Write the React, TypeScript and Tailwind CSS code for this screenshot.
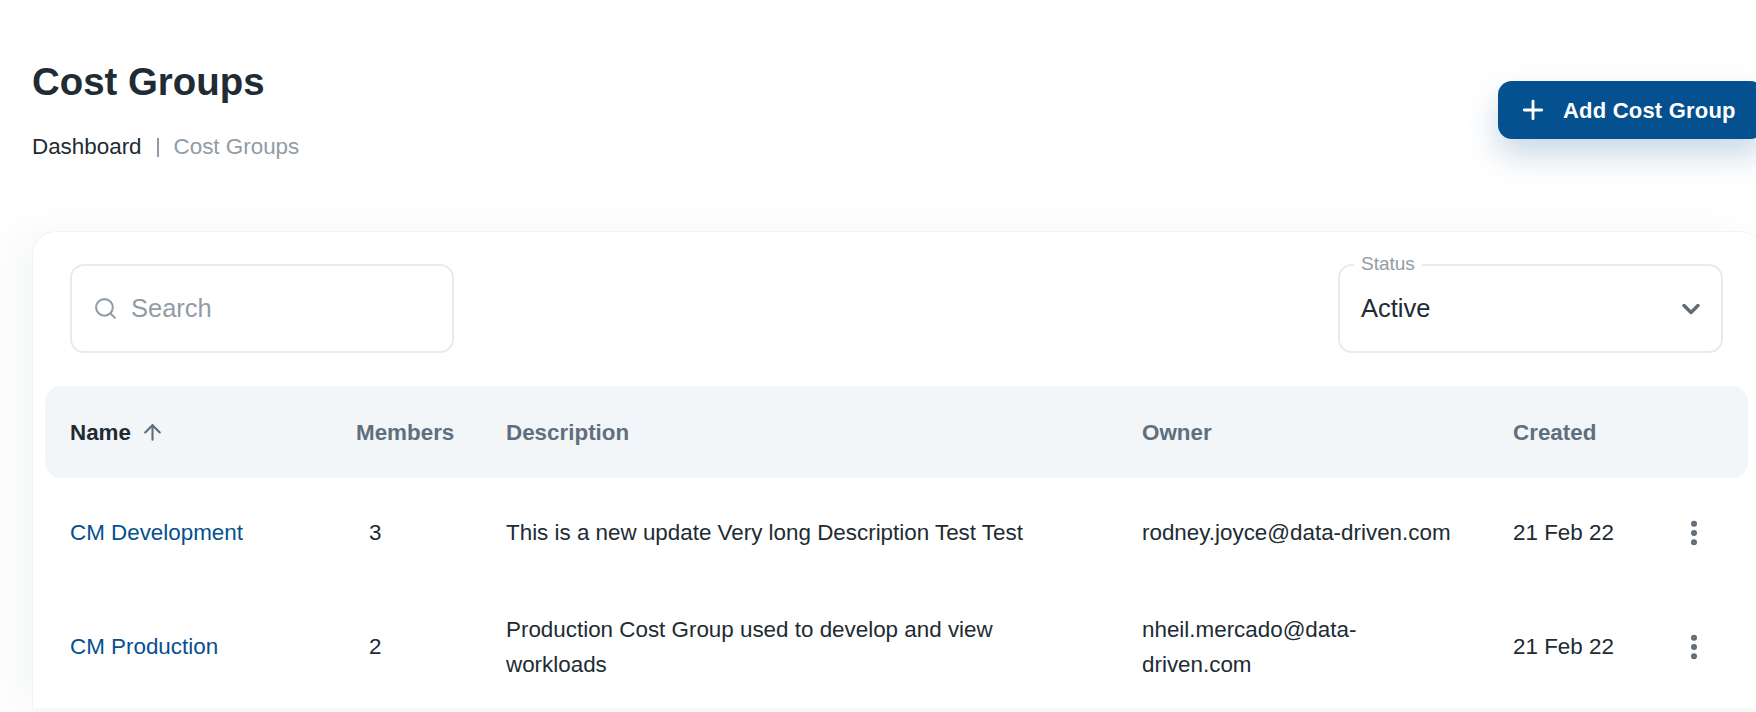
import { ArrowUp, ChevronDown, EllipsisVertical, Plus, Search } from "lucide-react"

const rows = [
  {
    name: "CM Development",
    members: 3,
    description: "This is a new update Very long Description Test Test",
    owner: "rodney.joyce@data-driven.com",
    created: "21 Feb 22",
    height: "h-[109px]",
  },
  {
    name: "CM Production",
    members: 2,
    description: "Production Cost Group used to develop and view workloads",
    owner: "nheil.mercado@data-driven.com",
    created: "21 Feb 22",
    height: "h-[119px]",
  },
]

const columns = "grid grid-cols-[286px_150px_636px_371px_165px_1fr] items-center pl-[25px]"

export default function App() {
  return (
    <div className="h-screen w-full overflow-hidden bg-white pl-8 pt-[60px] font-['Liberation_Sans',Arial,sans-serif] text-[22.4px] text-[#212b33]">
      <div className="w-[1732px]">
        {/* Page heading */}
        <div className="flex items-start justify-between">
          <div>
            <h1 className="text-[38.4px] font-bold leading-[44px] text-[#212b33]">Cost Groups</h1>
            <div className="mt-[28px] flex items-center leading-[30px]">
              <span>Dashboard</span>
              <span className="mx-[15px] h-[19px] w-[2px] bg-[#8f9ba6]" />
              <span className="text-[#919ca6]">Cost Groups</span>
            </div>
          </div>
          <button className="mt-[21px] flex h-[58px] w-[266px] items-center rounded-[14px] bg-[#05508f] pl-[20px] text-[22px] font-bold tracking-[0.2px] text-white shadow-[0_16px_32px_rgba(5,80,143,0.22)]">
            <Plus className="mr-[15px] h-[30px] w-[30px]" strokeWidth={2.25} />
            Add Cost Group
          </button>
        </div>

        {/* Table card */}
        <div className="mt-[69px] rounded-t-[24px] border-t border-l border-[#f1f3f5] bg-white pb-[2px] pl-[12px] pr-[16px] pt-[32px] shadow-[-20px_0_40px_rgba(33,43,51,0.04)]">
          <div className="flex justify-between pl-[25px] pr-[25px]">
            <div className="flex h-[89px] w-[384px] items-center rounded-[14px] border-2 border-[#e8eaed] pl-[21px] text-[25.5px] text-[#919ca6]">
              <Search className="mr-[13px] h-[25px] w-[25px]" strokeWidth={2} />
              Search
            </div>
            <div className="relative flex h-[89px] w-[385px] items-center justify-between rounded-[14px] border-2 border-[#e8eaed] pl-[21px] pr-[16px] text-[25.5px]">
              <span className="absolute -top-[13px] left-[14px] bg-white px-[7px] text-[19px] leading-[22px] text-[#919ca6]">Status</span>
              Active
              <ChevronDown className="h-[28px] w-[28px] text-[#5f6b76]" strokeWidth={3} />
            </div>
          </div>

          <div className={`${columns} mt-[33px] h-[92px] rounded-[16px] bg-[#f3f6f9] pt-[2px] font-bold text-[#5f6f7c]`}>
            <div className="flex items-center text-[#212b33]">
              Name
              <ArrowUp className="ml-[9px] h-[25px] w-[25px] text-[#5f6b76]" strokeWidth={2} />
            </div>
            <div>Members</div>
            <div>Description</div>
            <div>Owner</div>
            <div>Created</div>
            <div />
          </div>

          {rows.map((row) => (
            <div key={row.name} className={`${columns} ${row.height} leading-[35px]`}>
              <a className="text-[#05508f]">{row.name}</a>
              <div className="pl-[13px]">{row.members}</div>
              <div className="pr-[60px]">{row.description}</div>
              <div className="pr-[55px]">{row.owner}</div>
              <div>{row.created}</div>
              <EllipsisVertical className="h-[32px] w-[32px] text-[#5f6b76]" strokeWidth={2.5} />
            </div>
          ))}
        </div>
        <div className="h-[10px] bg-[#f7f8f9]" />
      </div>
    </div>
  )
}
